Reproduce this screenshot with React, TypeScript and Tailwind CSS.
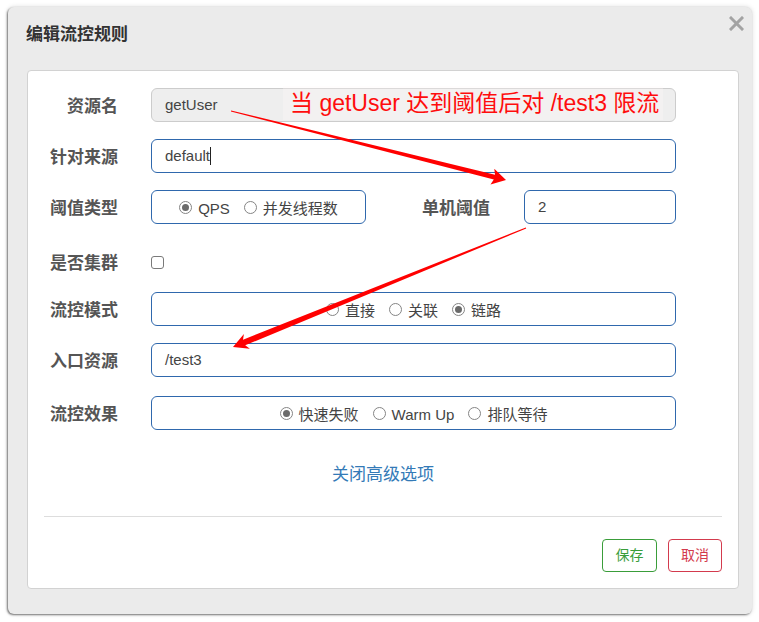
import React from 'react'

const font = { fontFamily: '"Liberation Sans", "Noto Sans CJK SC", sans-serif' }

function Radio({ checked }: { checked?: boolean }) {
  return (
    <span className="inline-flex w-[13px] h-[13px] rounded-full border border-[#858585] bg-white items-center justify-center shrink-0">
      {checked && <span className="w-[7px] h-[7px] rounded-full bg-[#6a6a6a]" />}
    </span>
  )
}

function RadioGroup({ items, selected }: { items: string[]; selected: number }) {
  return (
    <div className="flex items-center justify-center gap-[14px]">
      {items.map((item, i) => (
        <label key={item} className="flex items-center gap-[6px] text-[15px] text-[#444]">
          <Radio checked={i === selected} />
          <span className="leading-none pt-[2px]">{item}</span>
        </label>
      ))}
    </div>
  )
}

function Label({ children, className = 'w-[90px]' }: { children: React.ReactNode; className?: string }) {
  return (
    <div className={`${className} pt-[3px] text-right text-[17px] font-bold text-[#555] leading-none shrink-0`}>
      {children}
    </div>
  )
}

const boxCls = 'h-[34px] border border-[#2f68ad] rounded-[6px] bg-white flex items-center'

export default function App() {
  return (
    <div className="relative w-[759px] h-[622px] bg-white overflow-hidden" style={font}>
      <div className="pt-[7px] pl-[8px]">
        <div className="relative w-[744px] h-[607px] bg-[#ebebeb] rounded-[6px] shadow-[-1px_1px_2px_rgba(0,0,0,0.5),0_0_5px_rgba(0,0,0,0.15)]">
          {/* header */}
          <div className="h-[63px] pl-[18px] pt-[18px]">
            <h4 className="text-[17px] font-bold text-[#333] leading-[20px]">编辑流控规则</h4>
          </div>
          <svg className="absolute left-[721px] top-[9px]" width="15" height="15" viewBox="0 0 15 15">
            <path d="M2 2 13 13M13 2 2 13" stroke="#a3a3a3" strokeWidth="3" strokeLinecap="square" />
          </svg>

          {/* body card */}
          <div className="ml-[19px] w-[712px] h-[519px] bg-white border border-[#d2d2d2] rounded-[4px] pt-[17px]">
            <div className="flex flex-col gap-[17px]">
              <div className="flex items-center h-[34px]">
                <Label>资源名</Label>
                <div className="ml-[33px] w-[525px] h-[34px] border border-[#cccccc] bg-[#eeeeee] rounded-[6px] flex items-center px-[13px] text-[15px] text-[#444]">
                  getUser
                </div>
              </div>

              <div className="flex items-center h-[34px]">
                <Label>针对来源</Label>
                <div className={`ml-[33px] w-[525px] px-[13px] text-[15px] text-[#444] ${boxCls}`}>
                  default<span className="inline-block w-px h-[18px] bg-[#222]" />
                </div>
              </div>

              <div className="flex items-center h-[34px]">
                <Label>阈值类型</Label>
                <div className={`ml-[33px] w-[215px] justify-center ${boxCls}`}>
                  <RadioGroup items={['QPS', '并发线程数']} selected={0} />
                </div>
                <Label className="w-[124px]">单机阈值</Label>
                <div className={`ml-[34px] w-[152px] px-[13px] text-[15px] text-[#444] ${boxCls}`}>2</div>
              </div>

              <div className="flex items-center h-[34px] pt-[8px]">
                <Label>是否集群</Label>
                <span className="ml-[33px] w-[13px] h-[13px] border border-[#7a7a7a] rounded-[3px] bg-white" />
              </div>

              <div className="flex items-center h-[34px]">
                <Label>流控模式</Label>
                <div className={`ml-[33px] w-[525px] justify-center ${boxCls}`}>
                  <RadioGroup items={['直接', '关联', '链路']} selected={2} />
                </div>
              </div>

              <div className="flex items-center h-[34px]">
                <Label>入口资源</Label>
                <div className={`ml-[33px] w-[525px] px-[13px] text-[15px] text-[#444] ${boxCls}`}>/test3</div>
              </div>

              <div className="flex items-center h-[34px] mt-[2px]">
                <Label>流控效果</Label>
                <div className={`ml-[33px] w-[525px] justify-center ${boxCls}`}>
                  <RadioGroup items={['快速失败', 'Warm Up', '排队等待']} selected={0} />
                </div>
              </div>
            </div>

            <div className="mt-[35px] text-center text-[17px] leading-[20px] text-[#337ab7]">关闭高级选项</div>

            <div className="mx-[16px] mt-[31px] h-px bg-[#dddddd]" />

            <div className="mx-[16px] mt-[22px] flex justify-end gap-[11px]">
              <button className="w-[55px] h-[33px] border border-[#3a9d3a] rounded-[4px] text-[14px] text-[#3a9d3a] bg-white">保存</button>
              <button className="w-[54px] h-[33px] border border-[#d33a4d] rounded-[4px] text-[14px] text-[#d33a4d] bg-white">取消</button>
            </div>
          </div>
        </div>
      </div>

      {/* annotation */}
      <div className="absolute left-[283px] top-[86px] h-[34px] flex items-center pl-[7px] pr-[4px] text-[23px] leading-none text-[#ff0d0d] bg-[#fff8f8]/30">
        当 getUser 达到阈值后对 /test3 限流
      </div>
      <svg className="absolute left-0 top-0 pointer-events-none" width="759" height="622" viewBox="0 0 759 622">
        <polygon
          points="231.1,110.5 495,174.7 494.3,168.8 506,180 490.5,184.4 493.8,179.5 230.9,111.5"
          fill="#ff0000"
        />
        <polygon
          points="525.8,227.5 243,339.7 243.9,334 233,347 249.9,348.8 245.2,345.3 526.2,228.5"
          fill="#ff0000"
        />
      </svg>
    </div>
  )
}
